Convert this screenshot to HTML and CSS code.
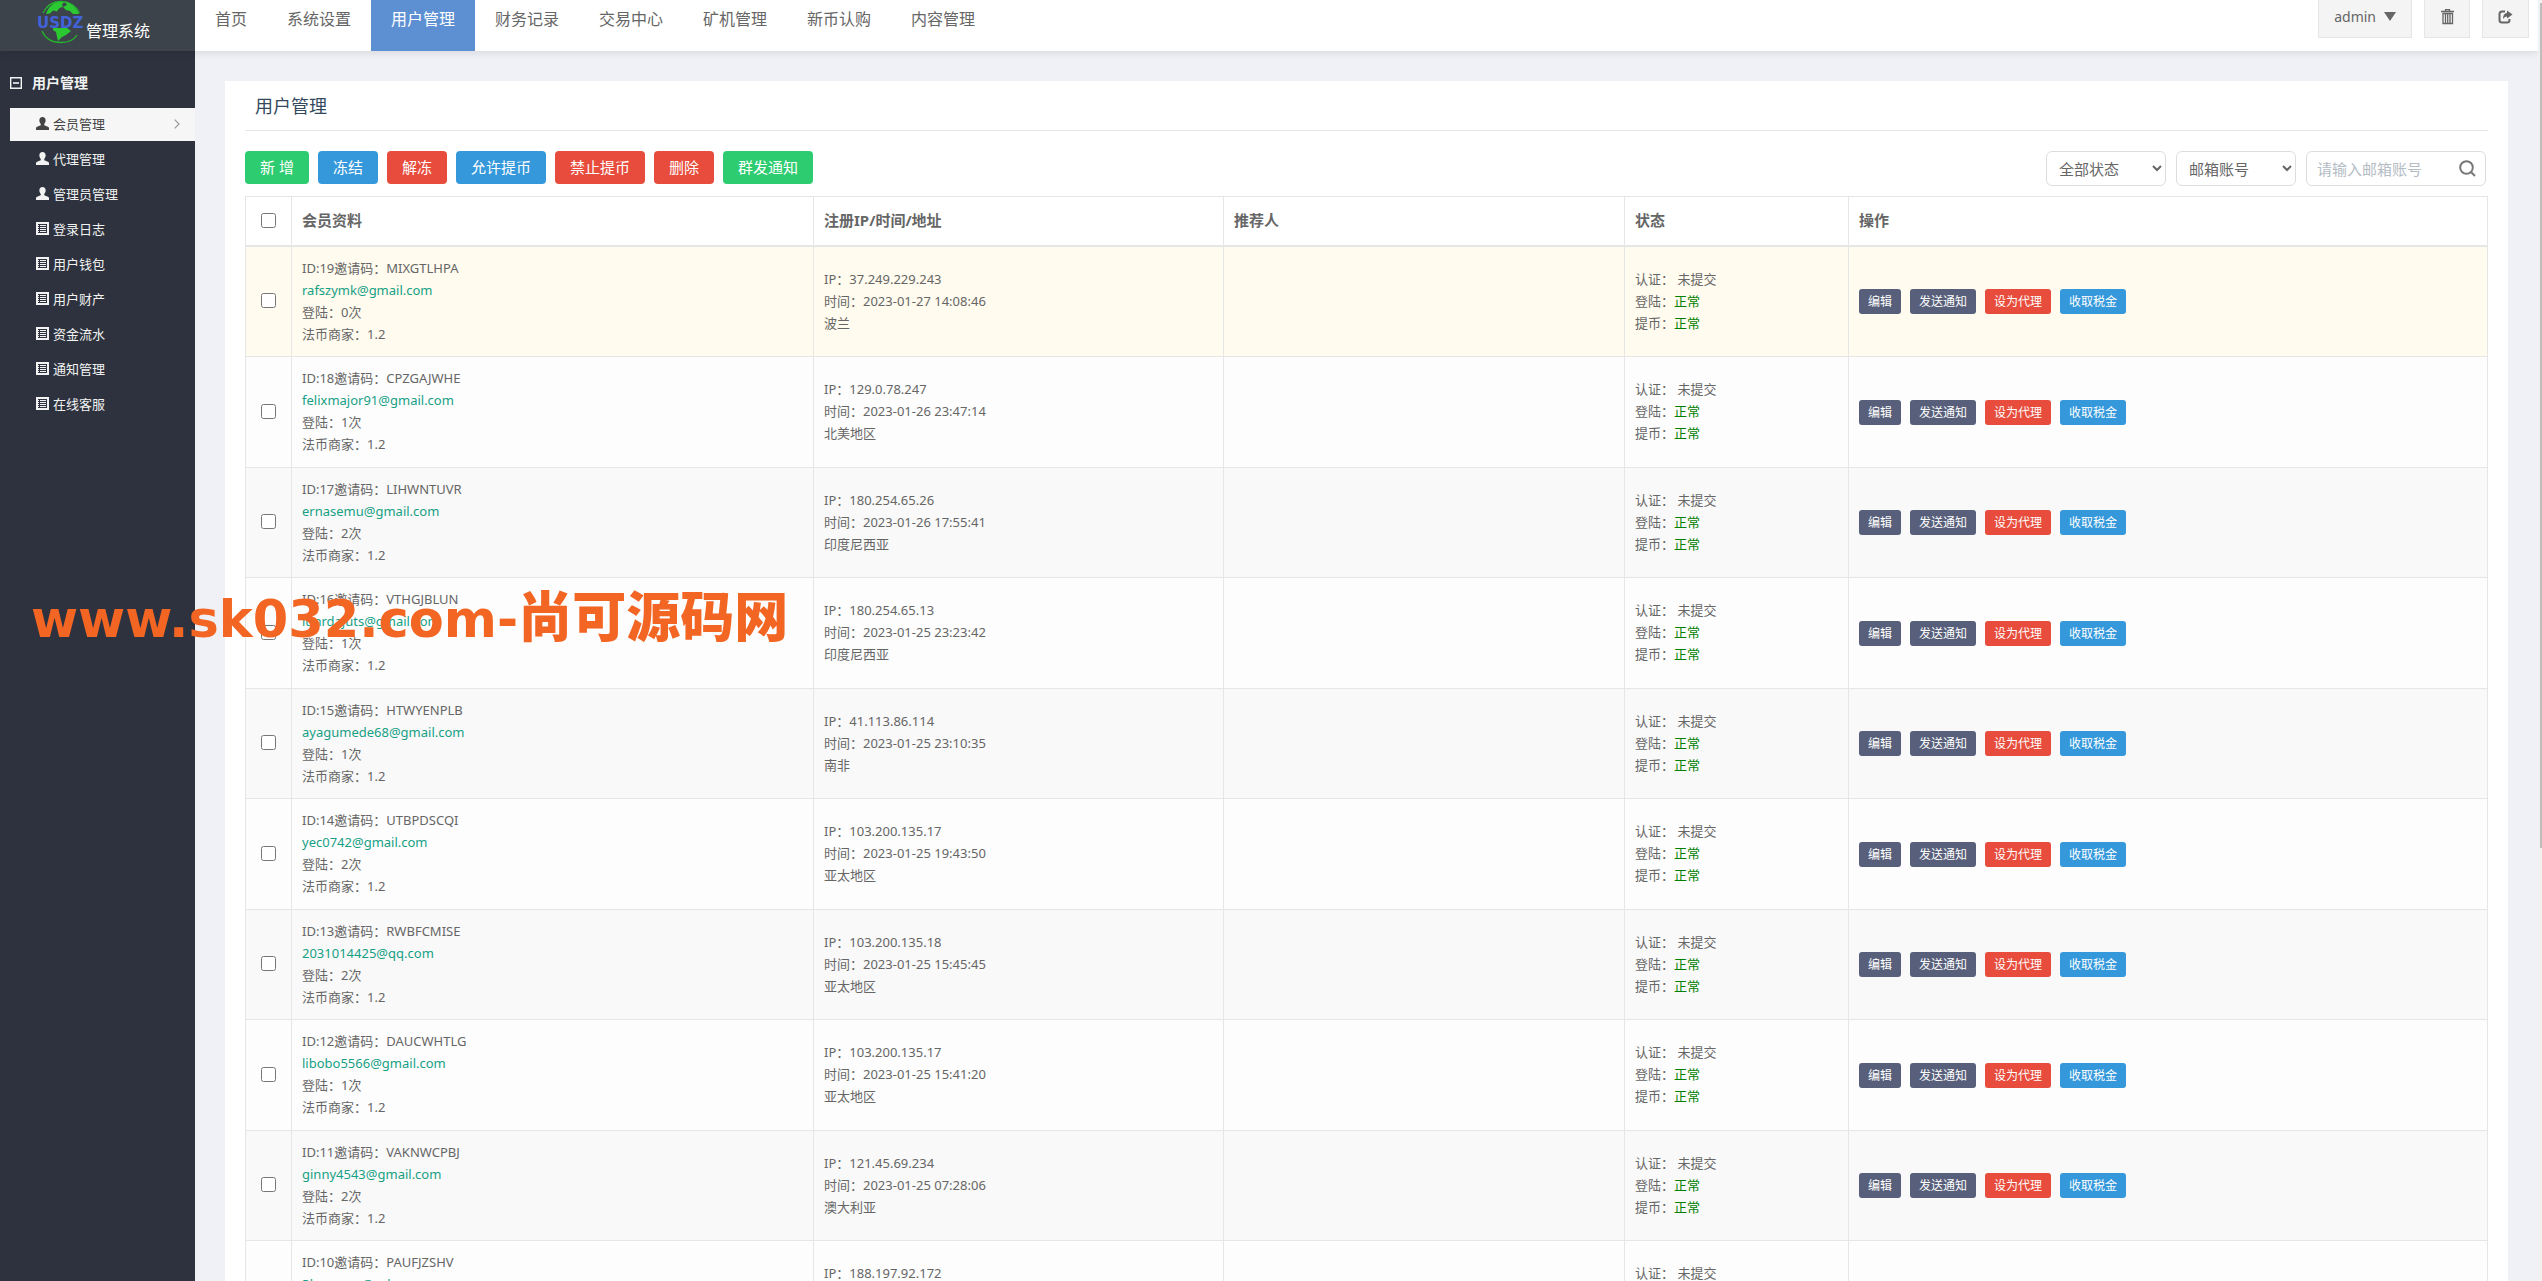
FILE: index.html
```html
<!DOCTYPE html>
<html lang="zh-CN">
<head>
<meta charset="utf-8">
<title>用户管理</title>
<link rel="stylesheet" href="styles.css">
</head>
<body>
<svg class="sprite" aria-hidden="true">
  <symbol id="user" viewBox="0 0 14 14"><path d="M7 0c2.200 0 3.400 1.400 3.400 3.500 0 1.900-.9 3.200-1.500 4v1.300l3.900 1.700q1.200.5 1.200 1.500v2H0v-2q0-1 1.200-1.500l3.900-1.700V7.500C4.500 6.700 3.600 5.400 3.600 3.500 3.600 1.400 4.800 0 7 0z" fill="currentColor"/></symbol>
  <symbol id="list" viewBox="0 0 13 13"><path d="M0 0h13v13H0z" fill="currentColor"/><path d="M2 2h9v9H2z" fill="#2d323e"/><path d="M2 3.500h1M4 3.500h6M2 5.500h1M4 5.500h6M2 7.500h1M4 7.500h6M2 9.500h1M4 9.500h6" stroke="currentColor"/></symbol>
</svg>
<header class="topbar">
  <a class="logo" href="#">
    <svg class="globe" viewBox="0 0 48 46" role="img" aria-label="USDZ">
      <path d="M7 13C11 5 17 1.500 25 1.500S40 6 43.500 13M6 31c3 7 10 11.500 19 11.500S38 40 41 35" fill="none" stroke="#22b52b" stroke-width="1.300"/>
      <path d="M10 14C12 7 18 2 25 1.500l3 1-2 2 1 2-4 2-2 3-4-1-3 3zM29 2c6 1 11 5 14 12h-6l-3-3-4-1-3-3 4-2zM17 28h14l4 3-5 4-4 2-4 4-1-4-1-5-3-2z" fill="#2bc832"/>
      <text x="1" y="28" class="globe-text">USDZ</text>
    </svg>
    <span>管理系统</span>
  </a>
  <nav class="mainnav">
    <a href="#">首页</a><a href="#">系统设置</a><a class="active" href="#">用户管理</a><a href="#">财务记录</a><a href="#">交易中心</a><a href="#">矿机管理</a><a href="#">新币认购</a><a href="#">内容管理</a>
  </nav>
  <div class="tools">
    <button class="tool">admin <svg width="12" height="9" viewBox="0 0 12 9"><path d="M0 0h12L6 9z" fill="currentColor"/></svg></button>
    <button class="tool" aria-label="清理缓存"><svg width="13" height="16" viewBox="0 0 13 16" fill="none" stroke="currentColor"><path d="M0 2.500h13M4.500 2V.5h4V2M2 4.500h9.500v10H2zM4.500 5v9M6.700 5v9M9 5v9" stroke-width="1.300"/></svg></button>
    <button class="tool" aria-label="退出"><svg width="15" height="14" viewBox="0 0 15 14" fill="none" stroke="currentColor"><path d="M7 1.500H4Q1.500 1.500 1.500 4v6Q1.500 12.500 4 12.500h5q2.500 0 2.500-2.500V9" stroke-width="2"/><path d="M9 .5l5.500 4L9 8.500v-2Q6.500 6.300 5 9 5 3.500 9 2.800z" fill="currentColor" stroke="none"/></svg></button>
  </div>
</header>
<div class="layout">
  <aside class="sidebar">
    <h2><svg width="12" height="12" viewBox="0 0 12 12" fill="none" stroke="currentColor"><path d="M.7.7h10.600v10.600H.7z" stroke-width="1.400"/><path d="M3 6h6" stroke-width="1.600"/></svg>用户管理</h2>
    <nav class="sidenav">
      <a class="active" href="#"><svg><use href="#user"/></svg>会员管理<svg class="chev" viewBox="0 0 6 10"><path d="M.7.7L5 5 .7 9.300" fill="none" stroke="#999" stroke-width="1.200"/></svg></a>
      <a href="#"><svg><use href="#user"/></svg>代理管理</a>
      <a href="#"><svg><use href="#user"/></svg>管理员管理</a>
      <a href="#"><svg><use href="#list"/></svg>登录日志</a>
      <a href="#"><svg><use href="#list"/></svg>用户钱包</a>
      <a href="#"><svg><use href="#list"/></svg>用户财产</a>
      <a href="#"><svg><use href="#list"/></svg>资金流水</a>
      <a href="#"><svg><use href="#list"/></svg>通知管理</a>
      <a href="#"><svg><use href="#list"/></svg>在线客服</a>
    </nav>
  </aside>
  <main class="content">
    <section class="card">
      <h1>用户管理</h1>
      <div class="toolbar">
        <div class="actions">
          <button class="btn green">新 增</button>
          <button class="btn blue">冻结</button>
          <button class="btn red">解冻</button>
          <button class="btn blue">允许提币</button>
          <button class="btn red">禁止提币</button>
          <button class="btn red">删除</button>
          <button class="btn green">群发通知</button>
        </div>
        <form class="filters">
          <select aria-label="状态"><option>全部状态</option></select>
          <select aria-label="查询字段"><option>邮箱账号</option></select>
          <div class="search">
            <input type="text" aria-label="邮箱账号" placeholder="请输入邮箱账号">
            <button type="button" aria-label="搜索"><svg width="17" height="17" viewBox="0 0 17 17" fill="none" stroke="#777" stroke-width="2"><circle cx="7.500" cy="7.500" r="6.300"/><path d="M12 12l4 4"/></svg></button>
          </div>
        </form>
      </div>
      <table>
        <colgroup><col class="c-check"><col class="c-member"><col class="c-ip"><col class="c-ref"><col class="c-state"><col></colgroup>
        <thead><tr><th><input type="checkbox" aria-label="全选"></th><th>会员资料</th><th>注册IP/时间/地址</th><th>推荐人</th><th>状态</th><th>操作</th></tr></thead>
        <tbody id="rows"></tbody>
      </table>
    </section>
  </main>
</div>
<div class="scrollbar"></div>
<div class="watermark">www.sk032.com-<span>尚可源码网</span></div>
<script src="rows.js"></script>
</body>
</html>
```
FILE: rows.js
```js
const members = [
  [19, "MIXGTLHPA", "rafszymk@gmail.com", 0, "37.249.229.243", "2023-01-27 14:08:46", "波兰"],
  [18, "CPZGAJWHE", "felixmajor91@gmail.com", 1, "129.0.78.247", "2023-01-26 23:47:14", "北美地区"],
  [17, "LIHWNTUVR", "ernasemu@gmail.com", 2, "180.254.65.26", "2023-01-26 17:55:41", "印度尼西亚"],
  [16, "VTHGJBLUN", "lunrdajuts@gmail.com", 1, "180.254.65.13", "2023-01-25 23:23:42", "印度尼西亚"],
  [15, "HTWYENPLB", "ayagumede68@gmail.com", 1, "41.113.86.114", "2023-01-25 23:10:35", "南非"],
  [14, "UTBPDSCQI", "yec0742@gmail.com", 2, "103.200.135.17", "2023-01-25 19:43:50", "亚太地区"],
  [13, "RWBFCMISE", "2031014425@qq.com", 2, "103.200.135.18", "2023-01-25 15:45:45", "亚太地区"],
  [12, "DAUCWHTLG", "libobo5566@gmail.com", 1, "103.200.135.17", "2023-01-25 15:41:20", "亚太地区"],
  [11, "VAKNWCPBJ", "ginny4543@gmail.com", 2, "121.45.69.234", "2023-01-25 07:28:06", "澳大利亚"],
  [10, "PAUFJZSHV", "Plemenca@yahoo.com", 1, "188.197.92.172", "2023-01-25 05:12:30", "欧洲地区"]
];

document.getElementById("rows").innerHTML = members.map(([id, code, mail, logins, ip, time, place]) => `
  <tr>
    <td><input type="checkbox" aria-label="选择 ${id}"></td>
    <td>ID:${id}邀请码：${code}<br><a href="#">${mail}</a><br>登陆：${logins}次<br>法币商家：1.2</td>
    <td>IP：${ip}<br>时间：${time}<br>${place}</td>
    <td></td>
    <td>认证： 未提交<br>登陆：<b>正常</b><br>提币：<b>正常</b></td>
    <td><div class="ops"><button class="mini slate">编辑</button><button class="mini slate">发送通知</button><button class="mini red">设为代理</button><button class="mini blue">收取税金</button></div></td>
  </tr>`).join("");
```
FILE: styles.css
```css
* { box-sizing: border-box; }
html { height: 100%; }
body {
  margin: 0;
  height: 100%;
  display: flex;
  flex-direction: column;
  overflow: hidden;
  background: #f0f1f7;
  color: #666;
  font: 13px/22px "Noto Sans", "Noto Sans CJK SC", sans-serif;
}
a { color: inherit; text-decoration: none; }
button, input, select { font: inherit; color: inherit; margin: 0; }
button { border: 0; padding: 0; cursor: pointer; }
.sprite { display: none; }

.topbar {
  display: flex;
  flex: none;
  height: 51px;
  margin-right: 4px;
  background: #fff;
  box-shadow: 0 2px 8px rgba(0, 0, 0, .1);
  position: relative;
}
.logo {
  width: 195px;
  display: flex;
  gap: 2px;
  padding-left: 36px;
  background: #3d434b;
  color: #fff;
  font-size: 16px;
  line-height: 63px;
}
.globe { width: 48px; height: 46px; }
.globe-text { font: bold 15px "DejaVu Sans", sans-serif; fill: #4262d8; }
.mainnav { display: flex; font-size: 16px; line-height: 39px; }
.mainnav a { padding: 0 20px; }
.mainnav .active { background: #5d90d2; color: #fff; }
.tools { display: flex; gap: 12px; margin-left: auto; padding-right: 9px; }
.tool {
  display: flex;
  align-items: center;
  justify-content: center;
  gap: 8px;
  min-width: 46px;
  height: 38px;
  padding: 0 15px 4px;
  border: 1px solid #e6e6e6;
  border-top: 0;
  background: #f4f4f4;
  font-size: 14px;
}

.layout { display: flex; flex: 1; min-height: 0; margin-right: 4px; }
.sidebar { flex: none; width: 195px; background: #2d323e; color: #f2f2f2; }
.sidebar h2 {
  display: flex;
  align-items: center;
  gap: 10px;
  margin: 21px 0 14px;
  padding-left: 10px;
  font-size: 14px;
  line-height: 22px;
}
.sidenav { display: flex; flex-direction: column; gap: 2px; padding-left: 10px; }
.sidenav a { display: flex; align-items: center; gap: 4px; height: 33px; padding: 0 15px 2px 26px; }
.sidenav svg { width: 13px; height: 13px; }
.sidenav .active { background: #f6f6f6; color: #444; }
.sidenav .chev { width: 6px; height: 10px; margin-left: auto; }

.content { flex: 1; min-width: 0; padding: 30px 30px 0; overflow: hidden; }
.card { padding: 0 20px; background: #fff; }
h1 {
  margin: 0;
  padding: 0 10px;
  height: 50px;
  border-bottom: 1px solid #e6e6e6;
  color: #34495e;
  font-size: 18px;
  font-weight: 400;
  line-height: 50px;
}
.toolbar { display: flex; justify-content: space-between; padding: 20px 2px 10px 0; }
.actions, .filters { display: flex; gap: 9px; }
.filters { gap: 10px; }
.btn { height: 33px; padding: 0 15px; border-radius: 4px; color: #fff; font-size: 15px; line-height: 33px; }
.green { background: #2ecc71; }
.blue { background: #3498db; }
.red { background: #e74c3c; }
.slate { background: #585f7b; }
.filters select, .search { width: 120px; height: 35px; border: 1px solid #ddd; border-radius: 6px; background: #fff; font-size: 15px; }
.filters select { padding-left: 8px; }
.filters .search { display: flex; align-items: center; width: 180px; padding: 0 9px 0 10px; }
.search input { flex: 1; min-width: 0; border: 0; padding: 0; outline: 0; }
.search input::placeholder { color: #b4bcc4; }
.search button { display: flex; background: none; }

table { width: 100%; table-layout: fixed; border-collapse: separate; border-spacing: 0; border: solid #e6e6e6; border-width: 1px 0 0 1px; }
.c-check { width: 46px; }
.c-member { width: 522px; }
.c-ip { width: 410px; }
.c-ref { width: 401px; }
.c-state { width: 224px; }
th, td { padding: 0 10px 2px; border: solid #e6e6e6; border-width: 0 1px 1px 0; text-align: left; }
th { height: 50px; border-bottom-width: 2px; font-size: 15px; }
td { height: 110px; }
td:last-child { padding-bottom: 0; }
tr:nth-child(even) td { height: 111px; background: #fdfdfd; }
tr:nth-child(odd) td { background: #f9f9f9; }
tbody tr:first-child td { background: #fffbee; }
th:first-child, td:first-child { padding: 0 0 2px; }
input[type="checkbox"] { display: block; width: 15px; height: 15px; margin: 0 auto; }
td a { color: #16a085; }
td b { color: green; font-weight: 400; }
.ops { display: flex; gap: 9px; }
.mini { height: 25px; padding: 0 9px; border-radius: 3px; color: #fff; font-size: 12px; line-height: 25px; }

.scrollbar { position: fixed; top: 0; right: 0; width: 4px; height: 100%; background: #f1f1f1; }
.scrollbar::before { content: ""; position: absolute; top: 3px; right: 0; width: 2px; height: 66%; background: #bdbdbd; }
.watermark {
  position: absolute;
  left: 31px;
  top: 579px;
  color: #f26522;
  font: bold 51px/70px "DejaVu Sans", sans-serif;
  white-space: nowrap;
}
.watermark span { font-family: "Noto Sans CJK SC", sans-serif; font-size: 54px; font-weight: 900; }
```
